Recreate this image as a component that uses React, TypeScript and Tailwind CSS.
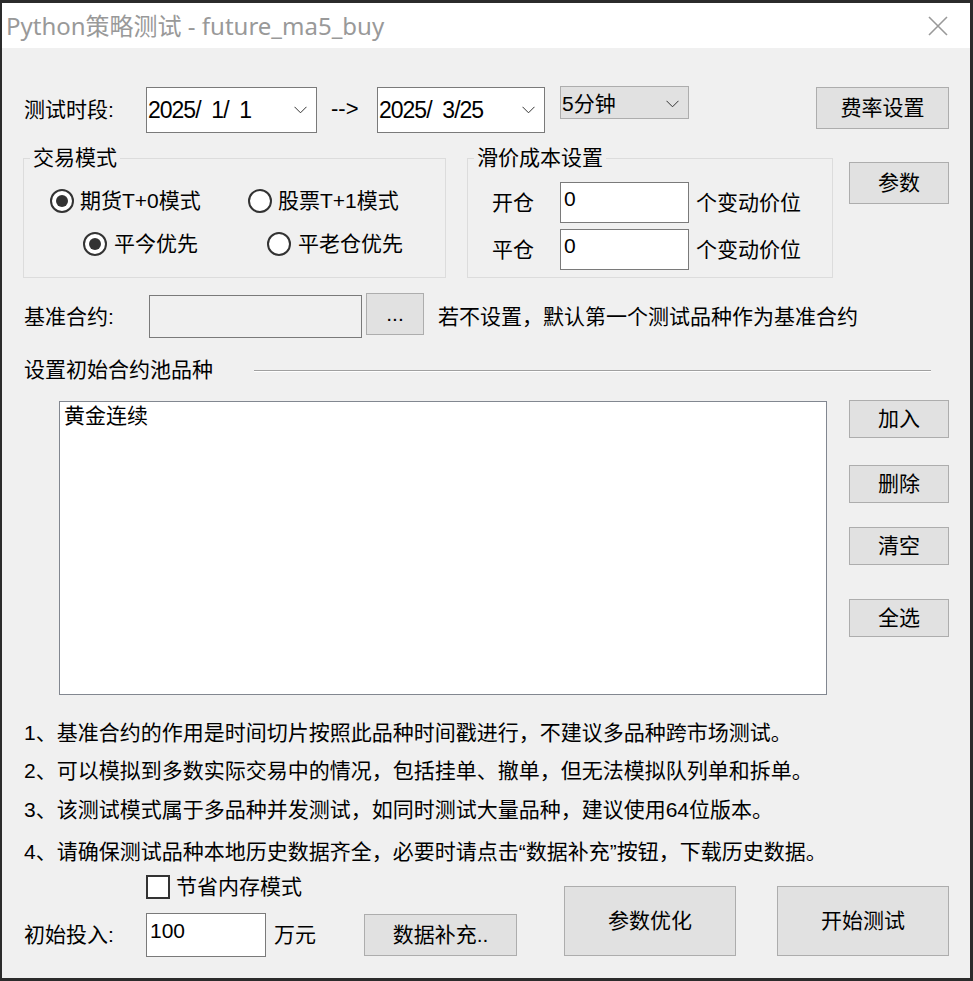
import React from "react";

const FONT = "font-['Liberation_Sans','Noto_Sans_CJK_SC',sans-serif]";

function Chevron() {
  return (
    <svg width="13" height="8" viewBox="0 0 13 8" className="shrink-0">
      <path d="M0.5 0.8 L6.5 6.8 L12.5 0.8" fill="none" stroke="#333" strokeWidth="1" />
    </svg>
  );
}

function WinButton({ children, className = "" }: { children: React.ReactNode; className?: string }) {
  return (
    <button
      type="button"
      className={"flex items-center justify-center bg-[#e1e1e1] border border-[#adadad] text-black shrink-0 " + className}
    >
      {children}
    </button>
  );
}

function Radio({ checked }: { checked?: boolean }) {
  return (
    <span className="w-[24px] h-[24px] rounded-full border-2 border-[#333] bg-white flex items-center justify-center shrink-0">
      {checked && <span className="w-[12px] h-[12px] rounded-full bg-[#333]" />}
    </span>
  );
}

function DateBox({ value, width }: { value: string; width: string }) {
  return (
    <div className={"mt-[1px] h-[46px] border border-[#7a7a7a] bg-white flex items-center justify-between pl-[1px] pr-[9px] shrink-0 " + width}>
      <span className="whitespace-pre text-[23px] tracking-[-1px] font-['Liberation_Sans',sans-serif]">{value}</span>
      <Chevron />
    </div>
  );
}

export default function App() {
  return (
    <div className="w-[973px] h-[981px] bg-[#2b2b2b] pt-[3px] pl-[2px] pr-[3px] pb-[3px] flex flex-col">
      {/* title bar */}
      <div className="h-[45px] bg-white flex items-center justify-between pl-[4px] pr-[22px] shrink-0">
        <span className="text-[24px] text-[#999] font-['Noto_Sans','Noto_Sans_CJK_SC',sans-serif]">
          Python策略测试 - future_ma5_buy
        </span>
        <svg width="20" height="20" viewBox="0 0 20 20">
          <path d="M1 1 L19 19 M19 1 L1 19" stroke="#999" strokeWidth="1.6" />
        </svg>
      </div>

      <div className={"flex-1 bg-[#f0f0f0] flex flex-col text-black text-[21px] leading-[24px] " + FONT}>
        {/* date range */}
        <div className="mt-[38px] h-[47px] flex items-start">
          <div className="ml-[22px] w-[122px] h-[47px] flex items-center">测试时段:</div>
          <DateBox value="2025/  1/  1" width="w-[171px]" />
          <div className="ml-[14px] w-[46px] h-[45px] flex items-center text-[22px]">--&gt;</div>
          <DateBox value="2025/  3/25" width="w-[168px]" />
          <div className="ml-[15px] w-[129px] h-[33px] bg-[#e1e1e1] border border-[#adadad] flex items-center justify-between pl-[1px] pr-[9px] pt-[3px]">
            <span>5分钟</span>
            <Chevron />
          </div>
          <WinButton className="ml-[127px] mt-[1px] w-[133px] h-[42px]">费率设置</WinButton>
        </div>

        {/* groups */}
        <div className="mt-[14px] flex items-start">
          <fieldset className="ml-[21px] w-[423px] h-[131px] border border-[#dcdcdc] m-0 p-0 min-w-0 shrink-0">
            <legend className="ml-[6px] px-[3px] leading-[22px]">交易模式</legend>
            <div className="mt-[19px] h-[26px] flex items-center">
              <div className="ml-[26px] w-[198px] flex items-center gap-[6px]">
                <Radio checked />
                <span>期货T+0模式</span>
              </div>
              <div className="flex items-center gap-[6px]">
                <Radio />
                <span>股票T+1模式</span>
              </div>
            </div>
            <div className="mt-[17px] h-[26px] flex items-center">
              <div className="ml-[59px] w-[184px] flex items-center gap-[7px]">
                <Radio checked />
                <span>平今优先</span>
              </div>
              <div className="flex items-center gap-[7px]">
                <Radio />
                <span>平老仓优先</span>
              </div>
            </div>
          </fieldset>

          <fieldset className="ml-[21px] w-[366px] h-[131px] border border-[#dcdcdc] m-0 p-0 min-w-0 shrink-0">
            <legend className="ml-[6px] px-[3px] leading-[22px]">滑价成本设置</legend>
            <div className="mt-[13px] h-[41px] flex items-center">
              <span className="ml-[24px] w-[68px]">开仓</span>
              <div className="w-[129px] h-[41px] border border-[#7a7a7a] bg-white pl-[3px] pt-[4px]">0</div>
              <span className="ml-[7px]">个变动价位</span>
            </div>
            <div className="mt-[6px] h-[41px] flex items-center">
              <span className="ml-[24px] w-[68px]">平仓</span>
              <div className="w-[129px] h-[41px] border border-[#7a7a7a] bg-white pl-[3px] pt-[4px]">0</div>
              <span className="ml-[7px]">个变动价位</span>
            </div>
          </fieldset>

          <WinButton className="ml-[16px] mt-[15px] w-[100px] h-[42px]">参数</WinButton>
        </div>

        {/* benchmark contract */}
        <div className="mt-[14px] h-[47px] flex items-start">
          <div className="ml-[22px] w-[125px] mt-[3px] h-[43px] flex items-center">基准合约:</div>
          <div className="mt-[3px] w-[213px] h-[43px] border border-[#7a7a7a] bg-[#f0f0f0] shrink-0" />
          <WinButton className="ml-[4px] mt-[1px] w-[58px] h-[42px]">...</WinButton>
          <div className="ml-[14px] mt-[3px] h-[43px] flex items-center">若不设置，默认第一个测试品种作为基准合约</div>
        </div>

        {/* pool header */}
        <div className="mt-[19px] h-[24px] flex items-center">
          <span className="ml-[22px] w-[230px] shrink-0">设置初始合约池品种</span>
          <div className="flex-1 mr-[39px] border-t border-[#a0a0a0] border-b border-b-white mt-[2px]" />
        </div>

        {/* pool list + buttons */}
        <div className="mt-[19px] flex items-start">
          <div className="ml-[57px] w-[768px] h-[294px] border border-[#828790] bg-white pl-[4px] pt-[2px] shrink-0">
            黄金连续
          </div>
          <div className="ml-[22px] -mt-[1px] flex flex-col">
            <WinButton className="w-[100px] h-[38px]">加入</WinButton>
            <WinButton className="mt-[27px] w-[100px] h-[38px]">删除</WinButton>
            <WinButton className="mt-[24px] w-[100px] h-[38px]">清空</WinButton>
            <WinButton className="mt-[34px] w-[100px] h-[38px]">全选</WinButton>
          </div>
        </div>

        {/* notes */}
        <div className="ml-[22px] flex flex-col">
          <p className="mt-[26px]">1、基准合约的作用是时间切片按照此品种时间戳进行，不建议多品种跨市场测试。</p>
          <p className="mt-[14px]">2、可以模拟到多数实际交易中的情况，包括挂单、撤单，但无法模拟队列单和拆单。</p>
          <p className="mt-[15px]">3、该测试模式属于多品种并发测试，如同时测试大量品种，建议使用64位版本。</p>
          <p className="mt-[18px]">4、请确保测试品种本地历史数据齐全，必要时请点击“数据补充”按钮，下载历史数据。</p>
        </div>

        {/* bottom */}
        <div className="mt-[10px] flex items-start">
          <div className="w-[515px] flex flex-col shrink-0">
            <div className="ml-[144px] h-[25px] flex items-center">
              <span className="w-[24px] h-[24px] border-2 border-[#333] bg-white shrink-0" />
              <span className="ml-[6px]">节省内存模式</span>
            </div>
            <div className="mt-[14px] h-[44px] flex items-start">
              <div className="ml-[22px] w-[122px] h-[44px] flex items-center">初始投入:</div>
              <div className="w-[120px] h-[44px] border border-[#7a7a7a] bg-white pl-[3px] pt-[5px] shrink-0">100</div>
              <div className="ml-[8px] w-[90px] h-[44px] flex items-center">万元</div>
              <WinButton className="mt-[1px] w-[153px] h-[42px]">数据补充..</WinButton>
            </div>
          </div>
          <WinButton className="ml-[47px] mt-[12px] w-[172px] h-[70px]">参数优化</WinButton>
          <WinButton className="ml-[41px] mt-[12px] w-[172px] h-[70px]">开始测试</WinButton>
        </div>
      </div>
    </div>
  );
}
